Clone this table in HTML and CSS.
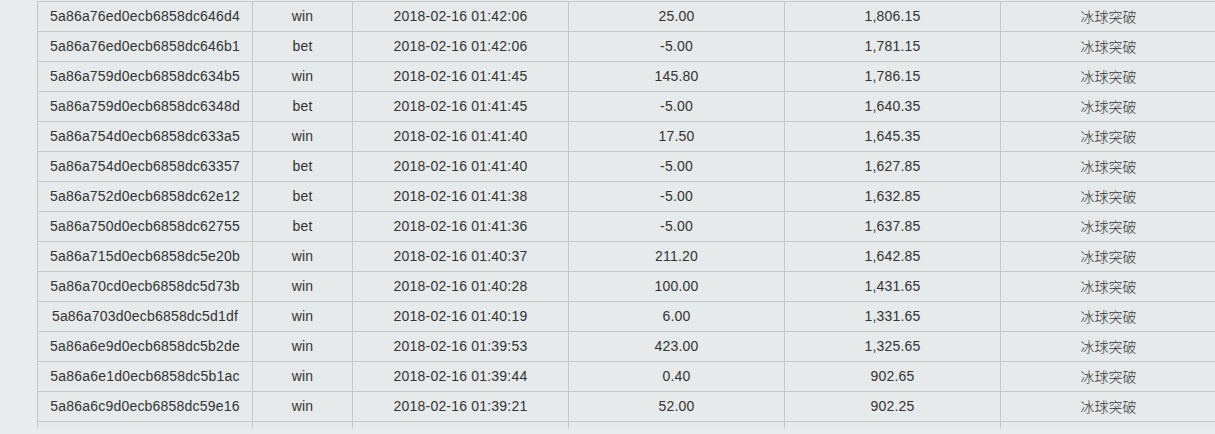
FILE: index.html
```html
<!DOCTYPE html>
<html>
<head>
<meta charset="utf-8">
<link rel="stylesheet" href="styles.css">
</head>
<body>
<div class="wrap">
<table class="grid">
<colgroup><col class="c1"><col class="c2"><col class="c3"><col class="c4"><col class="c5"><col class="c6"></colgroup>
<tbody>
<tr><td>5a86a76ed0ecb6858dc646d4</td><td>win</td><td>2018-02-16 01:42:06</td><td>25.00</td><td>1,806.15</td><td class="cn">冰球突破</td></tr>
<tr><td>5a86a76ed0ecb6858dc646b1</td><td>bet</td><td>2018-02-16 01:42:06</td><td>-5.00</td><td>1,781.15</td><td class="cn">冰球突破</td></tr>
<tr><td>5a86a759d0ecb6858dc634b5</td><td>win</td><td>2018-02-16 01:41:45</td><td>145.80</td><td>1,786.15</td><td class="cn">冰球突破</td></tr>
<tr><td>5a86a759d0ecb6858dc6348d</td><td>bet</td><td>2018-02-16 01:41:45</td><td>-5.00</td><td>1,640.35</td><td class="cn">冰球突破</td></tr>
<tr><td>5a86a754d0ecb6858dc633a5</td><td>win</td><td>2018-02-16 01:41:40</td><td>17.50</td><td>1,645.35</td><td class="cn">冰球突破</td></tr>
<tr><td>5a86a754d0ecb6858dc63357</td><td>bet</td><td>2018-02-16 01:41:40</td><td>-5.00</td><td>1,627.85</td><td class="cn">冰球突破</td></tr>
<tr><td>5a86a752d0ecb6858dc62e12</td><td>bet</td><td>2018-02-16 01:41:38</td><td>-5.00</td><td>1,632.85</td><td class="cn">冰球突破</td></tr>
<tr><td>5a86a750d0ecb6858dc62755</td><td>bet</td><td>2018-02-16 01:41:36</td><td>-5.00</td><td>1,637.85</td><td class="cn">冰球突破</td></tr>
<tr><td>5a86a715d0ecb6858dc5e20b</td><td>win</td><td>2018-02-16 01:40:37</td><td>211.20</td><td>1,642.85</td><td class="cn">冰球突破</td></tr>
<tr><td>5a86a70cd0ecb6858dc5d73b</td><td>win</td><td>2018-02-16 01:40:28</td><td>100.00</td><td>1,431.65</td><td class="cn">冰球突破</td></tr>
<tr><td>5a86a703d0ecb6858dc5d1df</td><td>win</td><td>2018-02-16 01:40:19</td><td>6.00</td><td>1,331.65</td><td class="cn">冰球突破</td></tr>
<tr><td>5a86a6e9d0ecb6858dc5b2de</td><td>win</td><td>2018-02-16 01:39:53</td><td>423.00</td><td>1,325.65</td><td class="cn">冰球突破</td></tr>
<tr><td>5a86a6e1d0ecb6858dc5b1ac</td><td>win</td><td>2018-02-16 01:39:44</td><td>0.40</td><td>902.65</td><td class="cn">冰球突破</td></tr>
<tr><td>5a86a6c9d0ecb6858dc59e16</td><td>win</td><td>2018-02-16 01:39:21</td><td>52.00</td><td>902.25</td><td class="cn">冰球突破</td></tr>
<tr class="tail"><td></td><td></td><td></td><td></td><td></td><td></td></tr>
</tbody>
</table>
</div>
</body>
</html>
```
FILE: styles.css
```css
html, body {
  margin: 0;
  padding: 0;
  background: #e8ecec;
  overflow: hidden;
}
.wrap {
  width: 1215px;
  height: 434px;
  overflow: hidden;
  padding: 1px 0 0 37px;
  box-sizing: border-box;
}
.grid {
  border-collapse: collapse;
  table-layout: fixed;
  width: 1179px;
  font-family: "Liberation Sans", Arial, "Noto Sans CJK SC", sans-serif;
  font-size: 14px;
  letter-spacing: 0.2px;
  color: #333;
  background: #e6eaea;
}
.c1 { width: 215px; }
.c2 { width: 100px; }
.c3 { width: 216px; }
.c4 { width: 216px; }
.c5 { width: 216px; }
.c6 { width: 216px; }
.grid td {
  border: 1px solid #c3c7c7;
  height: 27px;
  padding: 0 0 2px 0;
  line-height: 16px;
  text-align: center;
  vertical-align: middle;
  white-space: nowrap;
}
.grid td.cn {
  font-family: "Noto Sans CJK SC", sans-serif;
  font-size: 14px;
  font-weight: 300;
  letter-spacing: 0;
}
.grid tr.tail td {
  height: 6px;
  padding: 0;
  border-bottom: none;
}
```
